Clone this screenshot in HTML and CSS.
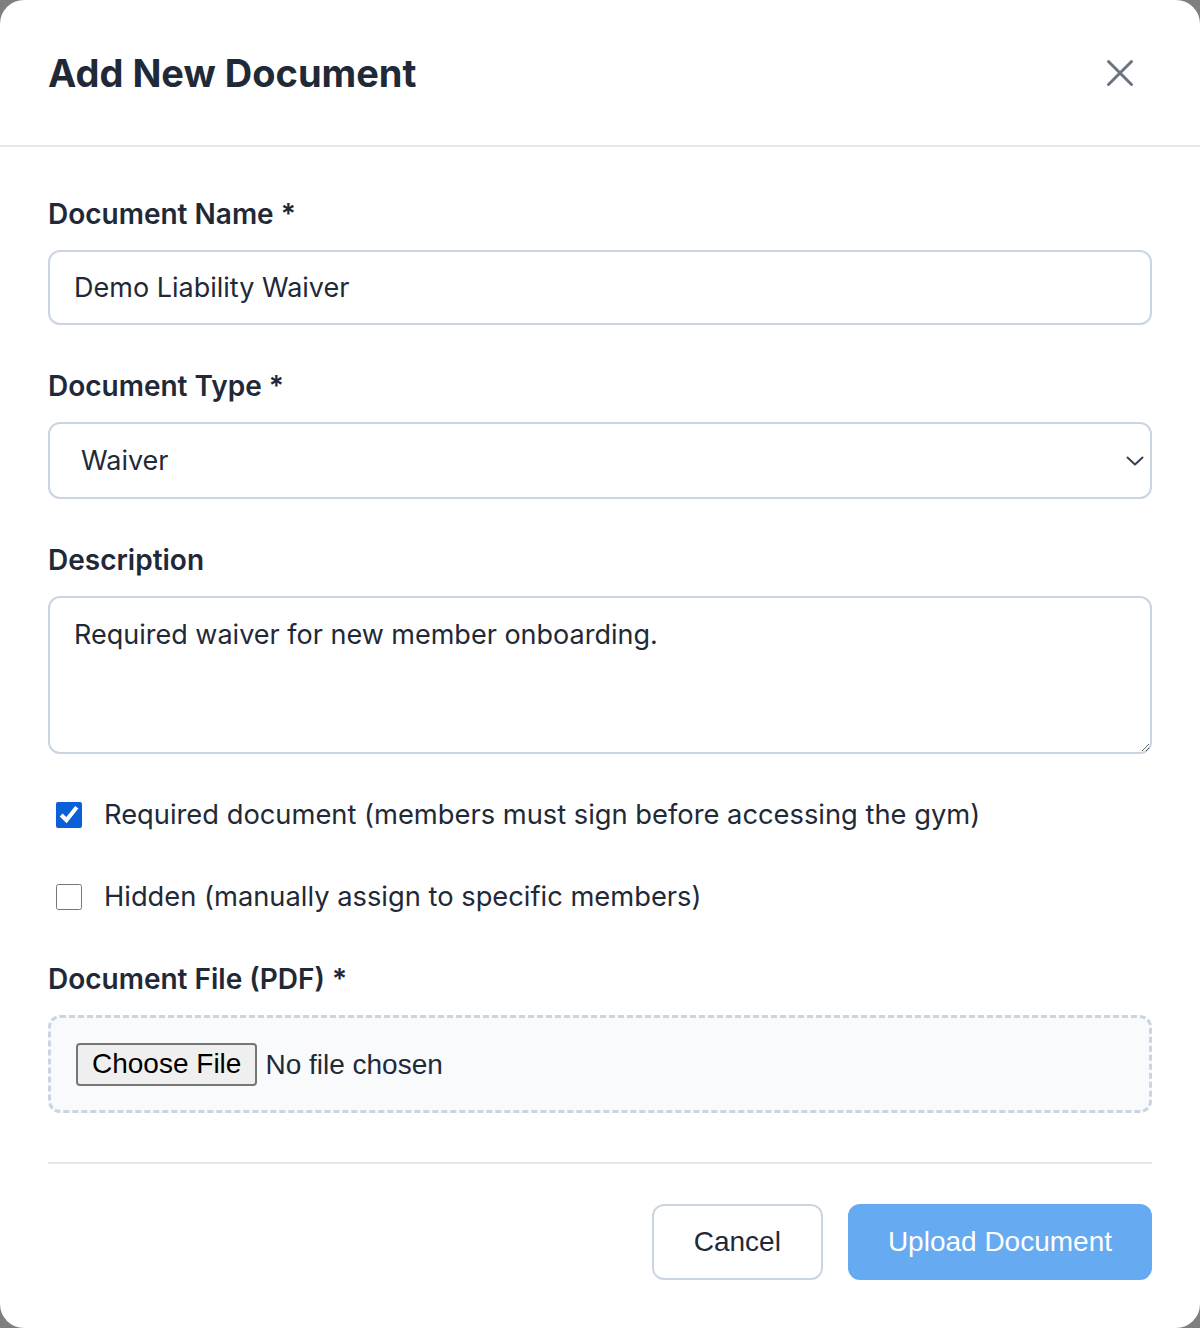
FILE: index.html
```html
<!DOCTYPE html>
<html lang="en">
<head>
    <meta charset="UTF-8">
    <meta name="viewport" content="width=device-width, initial-scale=1.0">
    <title>Add New Document</title>
    <link rel="stylesheet" href="styles.css">
</head>
<body>
<div class="modal">
    <div class="modal-header">
        <h2>Add New Document</h2>
        <button type="button" class="close-btn" aria-label="Close">
            <svg width="28" height="28" viewBox="0 0 28 28" fill="none" stroke="#6b7280" stroke-width="3" stroke-linecap="round">
                <path d="M2.5 2.5 L25.5 25.5 M25.5 2.5 L2.5 25.5"/>
            </svg>
        </button>
    </div>

    <form class="modal-body" id="document-form">
        <div class="form-group">
            <label for="doc-name">Document Name *</label>
            <input type="text" id="doc-name" name="name" value="Demo Liability Waiver" required>
        </div>

        <div class="form-group">
            <label for="doc-type">Document Type *</label>
            <div class="select-wrap">
                <select id="doc-type" name="type">
                    <option selected>Waiver</option>
                    <option>Contract</option>
                    <option>Policy</option>
                    <option>Other</option>
                </select>
                <svg class="chevron" width="18" height="10" viewBox="0 0 18 10" fill="none" stroke="#374151" stroke-width="2" stroke-linecap="round" stroke-linejoin="round">
                    <path d="M1.5 1.5 L9 8.5 L16.5 1.5"/>
                </svg>
            </div>
        </div>

        <div class="form-group">
            <label for="doc-desc">Description</label>
            <textarea id="doc-desc" name="description">Required waiver for new member onboarding.</textarea>
        </div>

        <div class="check-row">
            <input type="checkbox" id="doc-required" name="required" checked>
            <label for="doc-required">Required document (members must sign before accessing the gym)</label>
        </div>

        <div class="check-row">
            <input type="checkbox" id="doc-hidden" name="hidden">
            <label for="doc-hidden">Hidden (manually assign to specific members)</label>
        </div>

        <div class="form-group file-group">
            <label for="doc-file">Document File (PDF) *</label>
            <div class="file-box">
                <input type="file" id="doc-file" name="file" accept=".pdf" required>
            </div>
        </div>

        <div class="modal-footer">
            <button type="button" class="btn btn-cancel">Cancel</button>
            <button type="submit" class="btn btn-primary">Upload Document</button>
        </div>
    </form>
</div>
</body>
</html>
```

FILE: styles.css
```css
html, body {
    margin: 0;
    padding: 0;
}

body {
    background-color: #7f7f7f;
    font-family: Inter, "Noto Sans", sans-serif;
    color: #1f2937;
}

.modal {
    width: 1200px;
    height: 1328px;
    background-color: #fff;
    border-radius: 24px;
    overflow: hidden;
    box-sizing: border-box;
}

.modal-header {
    display: flex;
    align-items: center;
    justify-content: space-between;
    height: 145px;
    padding: 0 66px 0 48px;
    border-bottom: 2px solid #e5e7eb;
}

.modal-header h2 {
    margin: 0;
    font-size: 38px;
    font-weight: 700;
    color: #1f2937;
}

.close-btn {
    display: flex;
    padding: 0;
    border: none;
    background: none;
    cursor: pointer;
}

.modal-body {
    padding: 47px 48px 48px;
}

.form-group {
    margin-bottom: 41px;
}

.form-group > label {
    display: block;
    margin-bottom: 16px;
    font-size: 28px;
    line-height: 40px;
    font-weight: 600;
}

input[type="text"],
select,
textarea {
    display: block;
    width: 100%;
    box-sizing: border-box;
    border: 2px solid #cbd5e1;
    border-radius: 12px;
    background-color: #fff;
    font-family: Inter, "Noto Sans", sans-serif;
    font-size: 27px;
    color: #1f2937;
}

input[type="text"] {
    height: 75px;
    padding: 0 24px;
}

.select-wrap {
    position: relative;
}

select {
    height: 77px;
    padding: 0 31px;
    appearance: none;
}

.chevron {
    position: absolute;
    right: 8px;
    top: 34px;
    pointer-events: none;
}

textarea {
    height: 158px;
    padding: 17px 24px;
    line-height: 40px;
    resize: vertical;
}

.check-row {
    display: flex;
    align-items: center;
    gap: 22px;
    height: 40px;
    margin-bottom: 42px;
    padding-left: 8px;
}

.check-row input[type="checkbox"] {
    width: 26px;
    height: 26px;
    margin: 0;
    accent-color: #0b5fd7;
}

.check-row label {
    font-size: 27.3px;
    line-height: 40px;
}

.file-group {
    margin-bottom: 0;
}

.file-box {
    display: flex;
    align-items: center;
    height: 98px;
    padding: 0 25px;
    box-sizing: border-box;
    border: 3px dashed #cbd5e1;
    border-radius: 12px;
    background-color: #f8fafc;
}

input[type="file"] {
    font-family: "Liberation Sans", Arial, sans-serif;
    font-size: 28px;
    color: #1f2937;
}

input[type="file"]::file-selector-button {
    height: 43px;
    margin-right: 8px;
    padding: 0 14px;
    border: 2px solid #767676;
    border-radius: 4px;
    background-color: #efefef;
    font-family: "Liberation Sans", Arial, sans-serif;
    font-size: 28px;
    color: #000;
}

.modal-footer {
    display: flex;
    justify-content: flex-end;
    gap: 25px;
    margin-top: 49px;
    padding-top: 40px;
    border-top: 2px solid #e5e7eb;
}

.btn {
    height: 76px;
    padding: 0 40px;
    border-radius: 12px;
    font-family: "Liberation Sans", Arial, sans-serif;
    font-size: 28px;
    cursor: pointer;
}

.btn-cancel {
    border: 2px solid #cbd5e1;
    background-color: #fff;
    color: #1f2937;
}

.btn-primary {
    padding: 0 38px;
    border: 2px solid #66aaf2;
    background-color: #66aaf2;
    color: #fff;
}
```
